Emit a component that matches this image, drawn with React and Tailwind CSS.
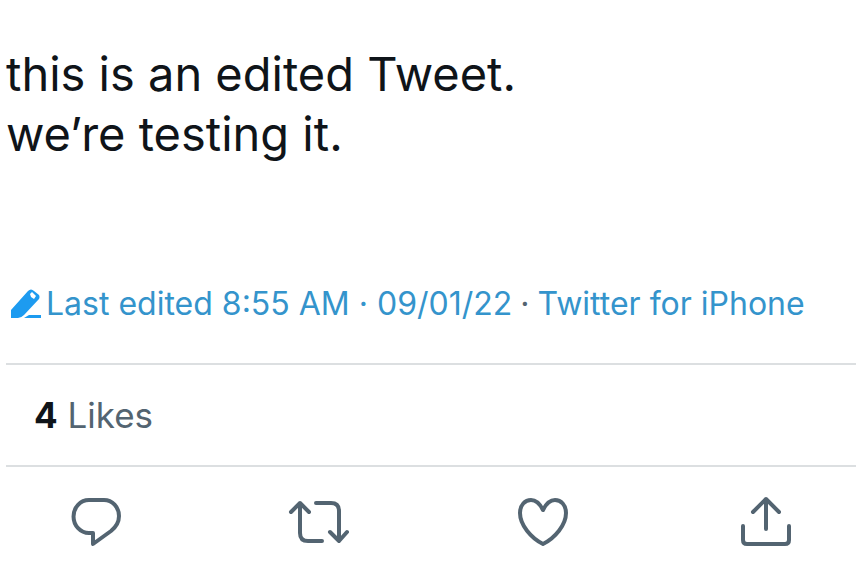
const actions = [
  {
    label: 'Reply',
    path: <path d="M23 8 H38 A15 16 0 0 1 53 24 C53 30 50 35 45 39 L27 52 V41 H23 A15 16 0 0 1 23 8 Z" />,
  },
  {
    label: 'Retweet',
    path: (
      <>
        <path d="M2 20 L11 11 L20 20 M11 11 V41 Q11 49 19 49 H33" />
        <path d="M27 11 H42 Q50 11 50 19 V49 M41 40 L50 49 L58 40" />
      </>
    ),
  },
  {
    label: 'Like',
    path: <path d="M30 18 C27 12 23 8 18 8 C12 8 7 13 7 21 C7 33 18 46 30 52 C42 46 53 33 53 21 C53 13 48 8 42 8 C37 8 33 12 30 18 Z" />,
  },
  {
    label: 'Share',
    path: (
      <>
        <path d="M17 20 L30 7 L43 20 M30 7 V37" />
        <path d="M7 34 V48 Q7 52 11 52 H49 Q53 52 53 48 V34" />
      </>
    ),
  },
]

function PencilIcon() {
  return (
    <svg viewBox="0 0 32 30" className="w-8 h-[30px] shrink-0" aria-hidden="true">
      <path fill="#1d9bf0" d="M1 29 L1 21 L18 2 Q21 -1 24 2 L29 6 Q30 8 29 10 L14 26 Q11 29 8 29 Z" />
      <path fill="#fff" d="M20 5 L22 3 L26 7 L24 10 L21 8 Z" />
      <path fill="#1d9bf0" d="M14 29 L19 26 H31 V29 Z" />
    </svg>
  )
}

export default function App() {
  return (
    <article className="bg-white min-h-screen px-1.5 pt-11 font-['Inter',sans-serif] text-[#0f1419]">
      <p className="text-[47px] leading-[60px]">
        this is an edited Tweet.
        <br />
        we’re testing it.
      </p>

      <div className="flex items-center gap-1 pl-1 mt-[120px] h-10 text-[32px] leading-10 text-[#3494cc] whitespace-nowrap">
        <a href="#history" className="flex items-center gap-1">
          <PencilIcon />
          <span>Last edited 8:55 AM · 09/01/22</span>
        </a>
        <span className="text-[#536471] px-1">·</span>
        <a href="#source">Twitter for iPhone</a>
      </div>

      <div className="mt-[39px] border-y-2 border-[#dcdfe1] h-[104px] flex items-center px-7">
        <a href="#likes" className="text-[35px] leading-10 text-[#536471]">
          <strong className="font-bold text-[#0f1419]">4</strong> Likes
        </a>
      </div>

      <div className="flex justify-between px-[60px] pt-[25px]">
        {actions.map((a) => (
          <button key={a.label} type="button" aria-label={a.label} className="text-[#536471]">
            <svg viewBox="0 0 60 60" className="w-[60px] h-[60px] overflow-visible" fill="none" stroke="currentColor" strokeWidth="4" strokeLinecap="round" strokeLinejoin="round">
              {a.path}
            </svg>
          </button>
        ))}
      </div>
    </article>
  )
}
